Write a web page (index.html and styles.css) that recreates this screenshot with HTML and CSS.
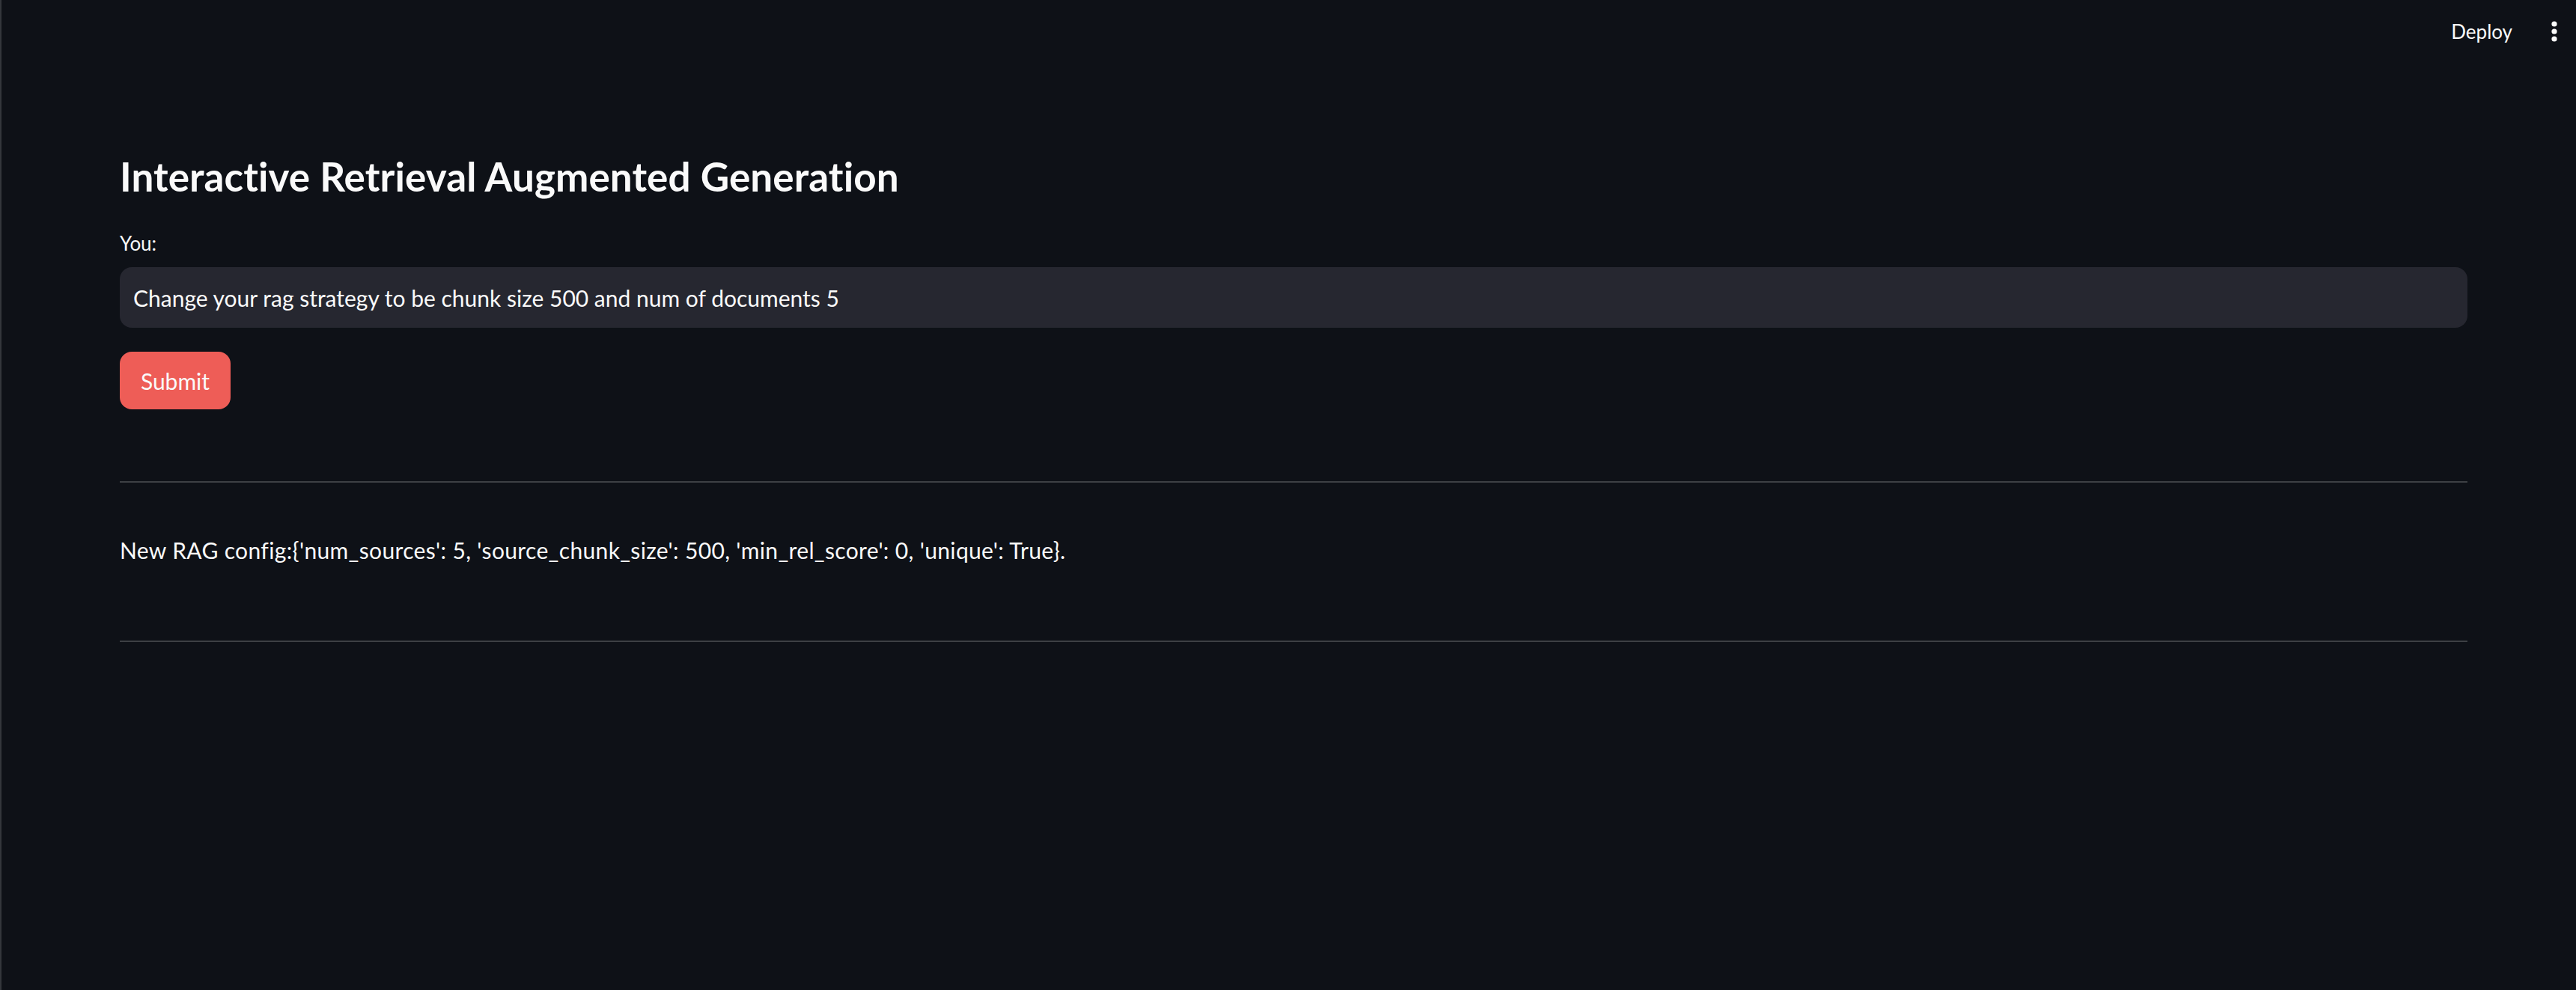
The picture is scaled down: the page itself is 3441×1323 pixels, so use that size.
FILE: index.html
```html
<!DOCTYPE html>
<html lang="en">
<head>
<meta charset="utf-8">
<title>Interactive Retrieval Augmented Generation</title>
<link rel="stylesheet" href="styles.css">
</head>
<body>
<div class="app">
  <header class="topbar">
    <span class="deploy">Deploy</span>
    <svg class="kebab" width="8" height="28" viewBox="0 0 8 28" aria-hidden="true">
      <circle cx="4" cy="4" r="3.6" fill="#fafafa"/>
      <circle cx="4" cy="14" r="3.6" fill="#fafafa"/>
      <circle cx="4" cy="24" r="3.6" fill="#fafafa"/>
    </svg>
  </header>
  <main class="main">
    <h1 class="title">Interactive Retrieval Augmented Generation</h1>
    <label class="label">You:</label>
    <div class="input">Change your rag strategy to be chunk size 500 and num of documents 5</div>
    <button class="submit">Submit</button>
    <hr class="divider divider-top">
    <p class="result">New RAG config:{'num_sources': 5, 'source_chunk_size': 500, 'min_rel_score': 0, 'unique': True}.</p>
    <hr class="divider divider-bottom">
  </main>
</div>
</body>
</html>
```

FILE: styles.css
```css
html, body {
  margin: 0;
  padding: 0;
  height: 100%;
}
body {
  background: #0e1117;
  color: #fafafa;
  font-family: Lato, "Open Sans", sans-serif;
  font-variant-ligatures: none;
}
.app {
  min-height: 100%;
  border-left: 2px solid #34373c;
  box-sizing: border-box;
}
.topbar {
  height: 84px;
  display: flex;
  align-items: center;
  justify-content: flex-end;
  padding-right: 25px;
  gap: 52px;
}
.deploy {
  font-size: 26px;
  line-height: 32px;
}
.kebab {
  display: block;
}
.main {
  padding: 0 145px 0 158px;
  display: flex;
  flex-direction: column;
  align-items: flex-start;
}
.title {
  margin: 120px 0 0;
  font-size: 53px;
  line-height: 64px;
  font-weight: 700;
  letter-spacing: 0.1px;
}
.label {
  margin-top: 41px;
  font-size: 26px;
  line-height: 32px;
}
.input {
  margin-top: 16px;
  align-self: stretch;
  height: 81px;
  box-sizing: border-box;
  background: #262730;
  border-radius: 16px;
  padding: 0 18px;
  display: flex;
  align-items: center;
  font-size: 30px;
}
.submit {
  margin-top: 32px;
  width: 148px;
  height: 77px;
  border: none;
  border-radius: 16px;
  background: #ee5d57;
  color: #fafafa;
  font-family: inherit;
  font-size: 30px;
  padding: 0;
}
.divider {
  align-self: stretch;
  border: none;
  height: 2px;
  background: #3d4044;
  margin: 0;
}
.divider-top {
  margin-top: 96px;
}
.result {
  margin: 70px 0 0;
  font-size: 30px;
  line-height: 40px;
  letter-spacing: 0.35px;
}
.divider-bottom {
  margin-top: 101px;
}
```
